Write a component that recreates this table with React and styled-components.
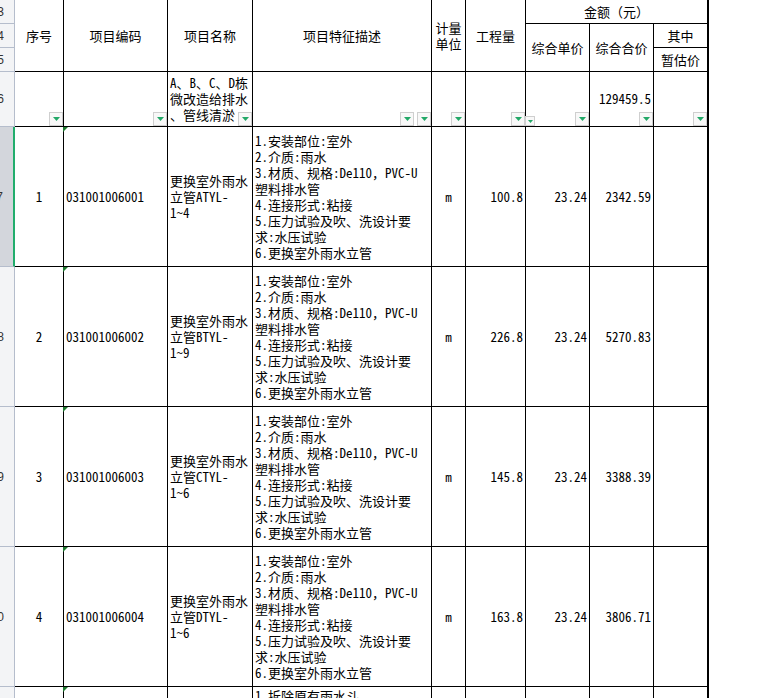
import React from "react";
import styled, { createGlobalStyle } from "styled-components";

const GlobalStyle = createGlobalStyle`
  html, body {
    margin: 0;
    padding: 0;
    background: #fff;
    overflow: hidden;
  }
  body {
    font-family: "Noto Sans Mono CJK SC", "Noto Sans CJK SC", sans-serif;
    font-size: 13px;
    color: #000;
  }
`;

const alignMap = { left: "flex-start", center: "center", right: "flex-end" };

const Sheet = styled.div`
  display: grid;
  grid-template-columns: 15px 49px 104px 85px 179px 34px 60px 64px 64px 55px;
  grid-template-rows: 24px 24px 24px 55px repeat(5, 140px);
  width: 709px;
`;

const Cell = styled.div`
  grid-column: ${(p) => p.$col} / span ${(p) => p.$span || 1};
  grid-row: ${(p) => p.$row} / span ${(p) => p.$rows || 1};
  position: relative;
  box-sizing: border-box;
  border-right: ${(p) => (p.$edge ? "2px" : "1px")} solid #000;
  border-bottom: 1px solid #000;
  display: flex;
  flex-direction: column;
  justify-content: ${(p) => (p.$top ? "flex-start" : "center")};
  align-items: ${(p) => alignMap[p.$align || "center"]};
  padding: ${(p) => (p.$top ? "1px 2px 0" : "0 2px")};
  line-height: 16px;
  white-space: nowrap;

  ${(p) =>
    p.$marked &&
    `
    &::before {
      content: "";
      position: absolute;
      top: 0;
      left: -1px;
      border-top: 5px solid #1f7a30;
      border-right: 5px solid transparent;
    }
  `}
`;

const Line = styled.div`
  height: 16px;
`;

const RowHead = styled.div`
  grid-column: 1;
  grid-row: ${(p) => p.$row};
  box-sizing: border-box;
  background: ${(p) => (p.$active ? "#d3d6dc" : "#f3f4f6")};
  border-right: ${(p) => (p.$active ? "2px solid #21ad6c" : "1px solid #b5bdcc")};
  border-bottom: 1px solid #b5bdcc;
  display: flex;
  justify-content: flex-end;
  align-items: center;
  padding-right: 10px;
  overflow: hidden;
  font-family: "Liberation Sans", sans-serif;
  font-size: 12px;
  color: #333;
  white-space: nowrap;
`;

const FilterBox = styled.span`
  position: absolute;
  bottom: 0;
  right: ${(p) => p.$offset || 0}px;
  width: 14px;
  height: 14px;
  box-sizing: border-box;
  border: 1px solid #cfcfcf;
  background: #f8f8f8;
  display: flex;
  align-items: center;
  justify-content: center;
`;

const MiniFilter = styled.span`
  position: absolute;
  bottom: 0;
  left: -1px;
  width: 10px;
  height: 10px;
  box-sizing: border-box;
  border: 1px solid #cfcfcf;
  background: #f8f8f8;
  display: flex;
  align-items: center;
  justify-content: center;
  z-index: 1;
`;

const Arrow = ({ w = 7, h = 4 }) => (
  <svg width={w} height={h} viewBox={`0 0 ${w} ${h}`}>
    <path d={`M0 0H${w}L${w / 2} ${h}Z`} fill="#22a867" />
  </svg>
);

const Filter = ({ offset }) => (
  <FilterBox $offset={offset}>
    <Arrow />
  </FilterBox>
);

const Lines = ({ items }) => items.map((t, i) => <Line key={i}>{t}</Line>);

const desc = [
  "1.安装部位:室外",
  "2.介质:雨水",
  "3.材质、规格:De110，PVC-U",
  "塑料排水管",
  "4.连接形式:粘接",
  "5.压力试验及吹、洗设计要",
  "求:水压试验",
  "6.更换室外雨水立管",
];

const items = [
  { no: "1", code: "031001006001", name: ["更换室外雨水", "立管ATYL-", "1~4"], qty: "100.8", price: "23.24", total: "2342.59" },
  { no: "2", code: "031001006002", name: ["更换室外雨水", "立管BTYL-", "1~9"], qty: "226.8", price: "23.24", total: "5270.83" },
  { no: "3", code: "031001006003", name: ["更换室外雨水", "立管CTYL-", "1~6"], qty: "145.8", price: "23.24", total: "3388.39" },
  { no: "4", code: "031001006004", name: ["更换室外雨水", "立管DTYL-", "1~6"], qty: "163.8", price: "23.24", total: "3806.71" },
];

const headLabels = ["3", "4", "5", "6", "7", "8", "9", "10", "11"];

export default function App() {
  return (
    <>
      <GlobalStyle />
      <Sheet>
        {headLabels.map((label, i) => (
          <RowHead key={label} $row={i + 1} $active={i === 4}>
            {label}
          </RowHead>
        ))}

        <Cell $col={2} $row={1} $rows={3}>序号</Cell>
        <Cell $col={3} $row={1} $rows={3}>项目编码</Cell>
        <Cell $col={4} $row={1} $rows={3}>项目名称</Cell>
        <Cell $col={5} $row={1} $rows={3}>项目特征描述</Cell>
        <Cell $col={6} $row={1} $rows={3}>
          <Lines items={["计量", "单位"]} />
        </Cell>
        <Cell $col={7} $row={1} $rows={3}>工程量</Cell>
        <Cell $col={8} $row={1} $span={3} $edge>金额（元）</Cell>
        <Cell $col={8} $row={2} $rows={2}>综合单价</Cell>
        <Cell $col={9} $row={2} $rows={2}>综合合价</Cell>
        <Cell $col={10} $row={2} $edge>其中</Cell>
        <Cell $col={10} $row={3} $edge>暂估价</Cell>

        <Cell $col={2} $row={4}>
          <Filter />
        </Cell>
        <Cell $col={3} $row={4}>
          <Filter />
        </Cell>
        <Cell $col={4} $row={4} $align="left">
          <Lines items={["A、B、C、D栋", "微改造给排水", "、管线清淤"]} />
          <Filter />
        </Cell>
        <Cell $col={5} $row={4}>
          <Filter offset={17} />
          <Filter />
        </Cell>
        <Cell $col={6} $row={4}>
          <Filter />
        </Cell>
        <Cell $col={7} $row={4}>
          <Filter />
        </Cell>
        <Cell $col={8} $row={4}>
          <MiniFilter>
            <Arrow w={5} h={3} />
          </MiniFilter>
          <Filter />
        </Cell>
        <Cell $col={9} $row={4} $align="right">
          129459.5
          <Filter />
        </Cell>
        <Cell $col={10} $row={4} $edge>
          <Filter />
        </Cell>

        {items.map((item, i) => {
          const row = i + 5;
          return (
            <React.Fragment key={item.code}>
              <Cell $col={2} $row={row}>{item.no}</Cell>
              <Cell $col={3} $row={row} $align="left" $marked>
                {item.code}
              </Cell>
              <Cell $col={4} $row={row} $align="left">
                <Lines items={item.name} />
              </Cell>
              <Cell $col={5} $row={row} $align="left">
                <Lines items={desc} />
              </Cell>
              <Cell $col={6} $row={row}>m</Cell>
              <Cell $col={7} $row={row} $align="right">{item.qty}</Cell>
              <Cell $col={8} $row={row} $align="right">{item.price}</Cell>
              <Cell $col={9} $row={row} $align="right">{item.total}</Cell>
              <Cell $col={10} $row={row} $edge />
            </React.Fragment>
          );
        })}

        <Cell $col={2} $row={9} />
        <Cell $col={3} $row={9} $marked />
        <Cell $col={4} $row={9} />
        <Cell $col={5} $row={9} $align="left" $top>
          <Lines items={["1.拆除原有雨水斗", "2.安装部位:室外"]} />
        </Cell>
        <Cell $col={6} $row={9} />
        <Cell $col={7} $row={9} />
        <Cell $col={8} $row={9} />
        <Cell $col={9} $row={9} />
        <Cell $col={10} $row={9} $edge />
      </Sheet>
    </>
  );
}
